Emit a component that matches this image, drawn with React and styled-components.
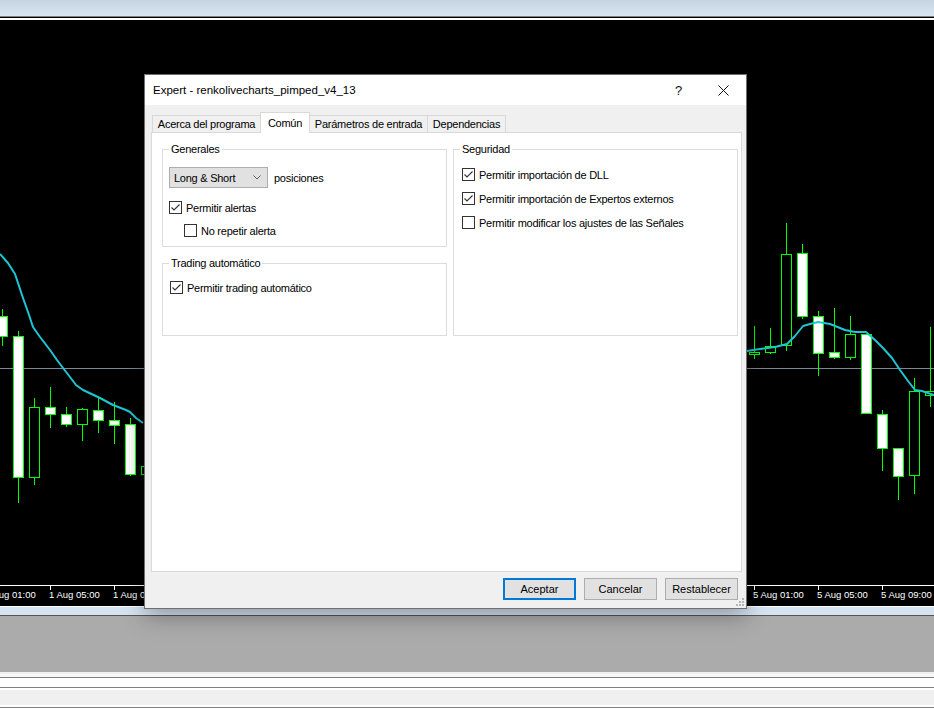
import React from 'react';
import styled, { createGlobalStyle } from 'styled-components';

const GlobalStyle = createGlobalStyle`
  html, body {
    margin: 0;
    padding: 0;
    background: #fff;
  }

  body {
    font-family: "Liberation Sans", Arial, sans-serif;
    font-size: 11px;
    color: #000;
  }
`;

const Page = styled.div`
  position: relative;
  width: 934px;
  height: 715px;
  overflow: hidden;
  display: flex;
  flex-direction: column;
`;

const TopBand = styled.div`
  height: 16px;
  flex-shrink: 0;
  background: linear-gradient(#c6d4e2, #d8e5f2);
`;

const Rule = styled.div`
  height: ${({ $h }) => $h || 1}px;
  flex-shrink: 0;
  background: ${({ $c }) => $c};
`;

const ChartArea = styled.div`
  height: 586px;
  flex-shrink: 0;
  background: #000;

  svg {
    display: block;
  }
`;

const BlueBand = styled.div`
  height: 8px;
  flex-shrink: 0;
  background: #d6e4f2;
`;

const GrayArea = styled.div`
  height: 56px;
  flex-shrink: 0;
  background: #ababab;
`;

const Dialog = styled.div`
  position: absolute;
  left: 144px;
  top: 74px;
  width: 603px;
  height: 535px;
  box-sizing: border-box;
  border: 1px solid #6f6f6f;
  background: #f0f0f0;
  box-shadow: 0 6px 22px rgba(0, 0, 0, 0.35);
  display: flex;
  flex-direction: column;
  letter-spacing: -0.25px;
`;

const TitleBar = styled.div`
  height: 30px;
  flex-shrink: 0;
  background: #fff;
  display: flex;
  align-items: center;
  padding-left: 8px;
`;

const Title = styled.div`
  flex: 1;
  font-size: 11.5px;
  letter-spacing: 0;
`;

const CaptionButton = styled.div`
  width: 45px;
  height: 30px;
  display: flex;
  align-items: center;
  justify-content: center;
  font-size: 13px;
  color: #111;
`;

const Body = styled.div`
  flex: 1;
  display: flex;
  flex-direction: column;
  padding: 7px 4px 0 6px;
`;

const TabRow = styled.div`
  height: 20px;
  display: flex;
  align-items: flex-end;
  padding-left: 1px;
`;

const Tab = styled.div`
  position: relative;
  z-index: ${({ $active }) => ($active ? 2 : 0)};
  box-sizing: border-box;
  width: ${({ $w }) => $w}px;
  height: ${({ $active }) => ($active ? 21 : 17)}px;
  margin-bottom: ${({ $active }) => ($active ? -1 : 0)}px;
  border: 1px solid #d9d9d9;
  border-bottom: none;
  background: ${({ $active }) => ($active ? '#fff' : '#f0f0f0')};
  display: flex;
  align-items: center;
  justify-content: center;
  white-space: nowrap;

  & + & {
    margin-left: -1px;
  }
`;

const Panel = styled.div`
  position: relative;
  z-index: 1;
  box-sizing: border-box;
  height: 440px;
  border: 1px solid #d9d9d9;
  background: #fff;
  padding: 16px 0 0 10px;
  display: flex;
  gap: 6px;
  align-items: flex-start;
`;

const Column = styled.div`
  display: flex;
  flex-direction: column;
  gap: 16px;
`;

const Group = styled.div`
  position: relative;
  box-sizing: border-box;
  width: 285px;
  height: ${({ $h }) => $h}px;
  border: 1px solid #dcdcdc;
  padding: ${({ $pt }) => $pt}px 0 0 ${({ $pl }) => $pl}px;
`;

const Legend = styled.span`
  position: absolute;
  top: -8px;
  left: 6px;
  padding: 0 2px;
  line-height: 14px;
  background: #fff;
`;

const ComboRow = styled.div`
  display: flex;
  align-items: center;
  gap: 6px;
  height: 21px;
`;

const Combo = styled.div`
  box-sizing: border-box;
  width: 99px;
  height: 21px;
  border: 1px solid #adadad;
  background: #e1e1e1;
  padding: 0 6px 0 4px;
  display: flex;
  align-items: center;
  justify-content: space-between;
`;

const CheckRow = styled.div`
  display: flex;
  align-items: center;
  height: 13px;
  margin-top: ${({ $mt }) => $mt || 0}px;
  padding-left: ${({ $indent }) => $indent || 0}px;
  white-space: nowrap;
`;

const Box = styled.span`
  box-sizing: border-box;
  width: 13px;
  height: 13px;
  flex-shrink: 0;
  border: 1px solid #333;
  background: #fff;
  display: flex;
  align-items: center;
  justify-content: center;
  margin-right: 4px;
`;

const ButtonRow = styled.div`
  display: flex;
  justify-content: flex-end;
  gap: 8px;
  margin-top: 6px;
  padding-right: 4px;
`;

const Button = styled.div`
  box-sizing: border-box;
  width: 73px;
  height: 22px;
  border: ${({ $primary }) => ($primary ? '2px solid #0078d7' : '1px solid #adadad')};
  background: #e1e1e1;
  display: flex;
  align-items: center;
  justify-content: center;
  letter-spacing: 0;
`;

const Grip = styled.svg`
  position: absolute;
  right: 1px;
  bottom: 1px;
`;

const Check = ({ checked, label, mt, indent }) => (
  <CheckRow $mt={mt} $indent={indent}>
    <Box>
      {checked && (
        <svg width="11" height="11" viewBox="0 0 11 11">
          <polyline points="1.5,5.5 4,8 9.5,2.5" fill="none" stroke="#333" strokeWidth="1.1" />
        </svg>
      )}
    </Box>
    {label}
  </CheckRow>
);

const leftCandles = [
  { x: 2, top: 316, bottom: 336, hi: 309, lo: 346 },
  { x: 18, top: 336, bottom: 477, hi: 331, lo: 503 },
  { x: 34, top: 407, bottom: 477, hi: 398, lo: 485, hollow: true },
  { x: 50, top: 407, bottom: 414, hi: 387, lo: 428 },
  { x: 66, top: 414, bottom: 424, hi: 407, lo: 427 },
  { x: 82, top: 409, bottom: 424, hi: 408, lo: 441, hollow: true },
  { x: 98, top: 410, bottom: 420, hi: 398, lo: 433 },
  { x: 114, top: 420, bottom: 425, hi: 402, lo: 444 },
  { x: 130, top: 424, bottom: 474, hi: 418, lo: 476 },
  { x: 146, top: 466, bottom: 474, hi: 460, lo: 480, hollow: true },
];

const rightCandles = [
  { x: 754, top: 352, bottom: 354, hi: 326, lo: 359, hollow: true },
  { x: 770, top: 346, bottom: 352, hi: 328, lo: 354, hollow: true },
  { x: 786, top: 254, bottom: 345, hi: 223, lo: 351, hollow: true },
  { x: 802, top: 253, bottom: 316, hi: 244, lo: 319 },
  { x: 818, top: 316, bottom: 353, hi: 311, lo: 376 },
  { x: 834, top: 352, bottom: 357, hi: 308, lo: 359 },
  { x: 850, top: 334, bottom: 357, hi: 316, lo: 360, hollow: true },
  { x: 866, top: 334, bottom: 413, hi: 334, lo: 413 },
  { x: 882, top: 414, bottom: 448, hi: 410, lo: 471 },
  { x: 898, top: 448, bottom: 476, hi: 448, lo: 500 },
  { x: 914, top: 391, bottom: 475, hi: 378, lo: 494, hollow: true },
  { x: 930, top: 391, bottom: 395, hi: 327, lo: 407, hollow: true },
];

const maLeft = '0,254 8,263 15,274 18,283 23,298 28,312 33,327 40,337 50,350 57,360 63,368 70,377 76,385 83,390 100,398 113,405 126,410 130,412 136,418 143,423';
const maRight = '747,351 760,349 775,347 787,344 795,336 803,326 810,324 818,322 830,324 845,330 855,332 866,332 875,340 883,348 892,358 900,370 908,381 915,390 922,391 934,395';

// only the ticks left and right of the dialog are visible
const timeLabels = [
  [-14, '1 Aug 01:00'], [50, '1 Aug 05:00'], [114, '1 Aug 09:00'],
  [754, '5 Aug 01:00'], [818, '5 Aug 05:00'], [882, '5 Aug 09:00'],
];

const Candle = ({ x, top, bottom, hi, lo, hollow }) => (
  <g stroke="#00ff00" strokeWidth="1" shapeRendering="crispEdges">
    {hi < top && <line x1={x + 0.5} x2={x + 0.5} y1={hi} y2={top} />}
    {lo > bottom && <line x1={x + 0.5} x2={x + 0.5} y1={bottom} y2={lo} />}
    <rect x={x - 4.5} y={top + 0.5} width="10" height={bottom - top} fill={hollow ? '#000' : '#fff'} />
  </g>
);

const Chart = () => (
  <svg width="934" height="586" viewBox="0 20 934 586">
    <line x1="0" x2="934" y1="368.5" y2="368.5" stroke="#7c8797" />
    {[...leftCandles, ...rightCandles].map((c) => (
      <Candle key={c.x} {...c} />
    ))}
    <polyline points={maLeft} fill="none" stroke="#1cc6d4" strokeWidth="2" strokeLinejoin="round" />
    <polyline points={maRight} fill="none" stroke="#1cc6d4" strokeWidth="2" strokeLinejoin="round" />
    <line x1="0" x2="934" y1="585.5" y2="585.5" stroke="#fff" />
    {timeLabels.map(([x, t]) => (
      <g key={x}>
        <line x1={x + 0.5} x2={x + 0.5} y1="585" y2="590" stroke="#fff" />
        <text x={x - 1} y="598" fill="#fff" fontSize="9.5" fontFamily="Liberation Sans, Arial, sans-serif">
          {t}
        </text>
      </g>
    ))}
  </svg>
);

const App = () => (
  <Page>
    <GlobalStyle />
    <TopBand />
    <Rule $c="#7f7f7f" />
    <Rule $c="#000" />
    <Rule $c="#fff" $h={2} />
    <ChartArea>
      <Chart />
    </ChartArea>
    <Rule $c="#fff" />
    <BlueBand />
    <Rule $c="#555" />
    <GrayArea />
    <Rule $c="#f0f0f0" $h={2} />
    <Rule $c="#f7f7f7" $h={3} />
    <Rule $c="#808080" />
    <Rule $c="#fff" $h={9} />
    <Rule $c="#808080" />
    <Rule $c="#fff" $h={2} />
    <Rule $c="#f0f0f0" $h={15} />
    <Rule $c="#fff" $h={2} />
    <Rule $c="#808080" />
    <Rule $c="#fff" $h={7} />

    <Dialog>
      <TitleBar>
        <Title>Expert - renkolivecharts_pimped_v4_13</Title>
        <CaptionButton>?</CaptionButton>
        <CaptionButton>
          <svg width="11" height="11" viewBox="0 0 11 11">
            <path d="M0.5 0.5 L10.5 10.5 M10.5 0.5 L0.5 10.5" stroke="#111" strokeWidth="1" />
          </svg>
        </CaptionButton>
      </TitleBar>
      <Body>
        <TabRow>
          <Tab $w={109}>Acerca del programa</Tab>
          <Tab $w={50} $active>Común</Tab>
          <Tab $w={119}>Parámetros de entrada</Tab>
          <Tab $w={79}>Dependencias</Tab>
        </TabRow>
        <Panel>
          <Column>
            <Group $h={98} $pt={17} $pl={6}>
              <Legend>Generales</Legend>
              <ComboRow>
                <Combo>
                  Long &amp; Short
                  <svg width="8" height="5" viewBox="0 0 8 5">
                    <polyline points="0.5,0.5 4,4 7.5,0.5" fill="none" stroke="#606060" />
                  </svg>
                </Combo>
                posiciones
              </ComboRow>
              <Check checked label="Permitir alertas" mt={13} />
              <Check label="No repetir alerta" mt={10} indent={15} />
            </Group>
            <Group $h={73} $pt={17} $pl={7}>
              <Legend>Trading automático</Legend>
              <Check checked label="Permitir trading automático" />
            </Group>
          </Column>
          <Group $h={187} $pt={18} $pl={8}>
            <Legend>Seguridad</Legend>
            <Check checked label="Permitir importación de DLL" />
            <Check checked label="Permitir importación de Expertos externos" mt={11} />
            <Check label="Permitir modificar los ajustes de las Señales" mt={11} />
          </Group>
        </Panel>
        <ButtonRow>
          <Button $primary>Aceptar</Button>
          <Button>Cancelar</Button>
          <Button>Restablecer</Button>
        </ButtonRow>
      </Body>
      <Grip width="10" height="10" viewBox="0 0 10 10">
        <g fill="#b5b5b5">
          <rect x="7" y="1" width="2" height="2" />
          <rect x="4" y="4" width="2" height="2" />
          <rect x="7" y="4" width="2" height="2" />
          <rect x="1" y="7" width="2" height="2" />
          <rect x="4" y="7" width="2" height="2" />
          <rect x="7" y="7" width="2" height="2" />
        </g>
      </Grip>
    </Dialog>
  </Page>
);

export default App;
